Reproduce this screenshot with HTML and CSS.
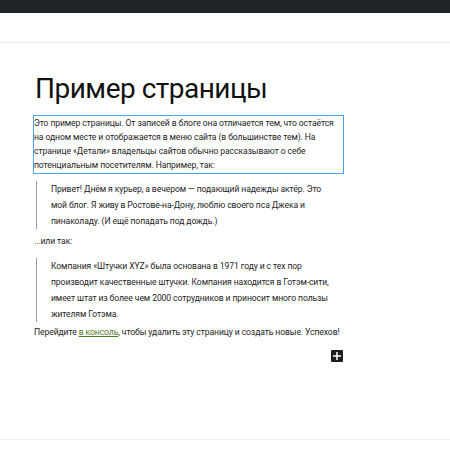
FILE: index.html
```html
<!DOCTYPE html>
<html lang="ru">
<head>
    <meta charset="UTF-8">
    <title>Пример страницы</title>
    <link rel="stylesheet" href="styles.css">
</head>
<body>
<div class="topbar"></div>
<div class="header"></div>

<div class="canvas">
    <div class="page">
        <h1 class="title">Пример страницы</h1>

        <p class="block selected">Это пример страницы. От записей в блоге она отличается тем, что остаётся на одном месте и отображается в меню сайта (в большинстве тем). На странице «Детали» владельцы сайтов обычно рассказывают о себе потенциальным посетителям. Например, так:</p>

        <blockquote class="quote first">
            <p>Привет! Днём я курьер, а вечером — подающий надежды актёр. Это мой блог. Я живу в Ростове-на-Дону, люблю своего пса Джека и пинаколаду. (И ещё попадать под дождь.)</p>
        </blockquote>

        <p class="block between">...или так:</p>

        <blockquote class="quote second">
            <p>Компания «Штучки XYZ» была основана в 1971 году и с тех пор производит качественные штучки. Компания находится в Готэм-сити, имеет штат из более чем 2000 сотрудников и приносит много пользы жителям Готэма.</p>
        </blockquote>

        <p class="block last">Перейдите <a href="#">в консоль</a>, чтобы удалить эту страницу и создать новые. Успехов!</p>

        <div class="inserter">
            <button class="add-block" type="button">
                <svg width="8" height="8" viewBox="0 0 8 8"><path d="M3.25 0h1.5v3.25H8v1.5H4.75V8h-1.5V4.75H0v-1.5h3.25z" fill="#fff"/></svg>
            </button>
        </div>
    </div>
</div>

<div class="footer"></div>
</body>
</html>
```

FILE: styles.css
```css
body {
    margin: 0;
    background-color: #fff;
    color: #1e1e1e;
    font-family: Roboto, "Open Sans", sans-serif;
}

.topbar {
    height: 13px;
    background-color: #1e2327;
}

.header {
    height: 29px;
    border-bottom: 1px solid #ebebeb;
}

.canvas {
    height: 396px;
}

.page {
    margin-left: 34px;
    width: 309px;
    padding-top: 28px;
}

.title {
    margin: 0 0 8px 1px;
    font-size: 28px;
    font-weight: 400;
    line-height: 36px;
    letter-spacing: -0.5px;
    color: #111;
}

.block {
    margin: 0;
    font-size: 8.6px;
    line-height: 14px;
    letter-spacing: -0.1px;
    white-space: nowrap;
}

.selected {
    border: 1px solid #4aa3ef;
    margin-left: -1px;
    margin-right: -1px;
    padding-bottom: 1px;
    white-space: normal;
    padding-right: 6px;
}

.between {
    margin-top: 5px;
}

.last {
    margin-top: 3px;
}

.quote {
    margin: 0 0 0 2px;
    padding-left: 14px;
    padding-right: 11px;
    border-left: 1px solid #999;
}

.quote p {
    margin: 0;
    font-size: 8.6px;
    line-height: 16px;
    letter-spacing: -0.1px;
}

.first {
    margin-top: 7px;
}

.second {
    margin-top: 10px;
}

a {
    color: #4f7a28;
}

.inserter {
    display: flex;
    justify-content: flex-end;
    margin-top: 11px;
}

.add-block {
    display: flex;
    align-items: center;
    justify-content: center;
    width: 12px;
    height: 12px;
    padding: 0;
    border: none;
    border-radius: 1px;
    background-color: #1e1e1e;
}

.footer {
    border-top: 1px solid #efefef;
    height: 10px;
}
```
